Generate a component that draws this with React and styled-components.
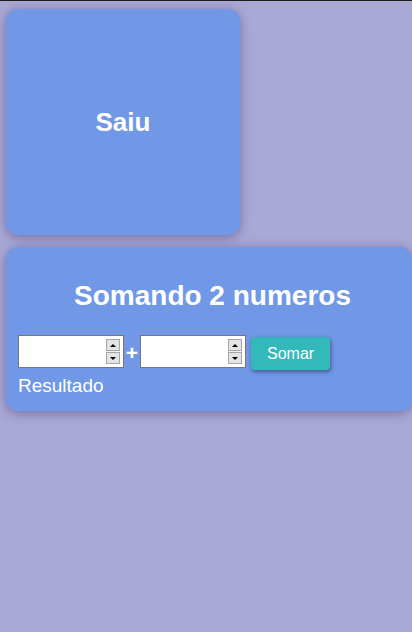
import React from "react";
import styled, { createGlobalStyle } from "styled-components";

const Global = createGlobalStyle`
  html { border-top: 1px solid #1b1b1b; background: #aaa9d6; }
  body {
    margin: 0;
    background: #aaa9d6;
    font-family: "Liberation Sans", Arial, sans-serif;
    min-height: 631px;
    overflow: hidden;
  }
`;

const Page = styled.div`
  display: flex;
  flex-direction: column;
  align-items: flex-start;
  gap: 12px;
  padding: 8px 0 0 6px;
`;

const Card = styled.div`
  box-sizing: border-box;
  background: #7098e6;
  border-radius: 12px;
  box-shadow: 0 2px 12px rgba(70, 60, 120, 0.55);
  color: #fff;
  width: ${(p) => p.$w}px;
  height: ${(p) => p.$h}px;
`;

const SplashCard = styled(Card)`
  display: flex;
  align-items: center;
  justify-content: center;
`;

const BigText = styled.h1`
  margin: 0;
  font-size: 26px;
  font-weight: bold;
  line-height: 30px;
`;

const SumCard = styled(Card)`
  display: flex;
  flex-direction: column;
  padding: 33px 12px 15px 12px;
`;

const Title = styled.h2`
  margin: 0 0 23px 0;
  padding-left: 7px;
  text-align: center;
  font-size: 28px;
  font-weight: bold;
  line-height: 32px;
`;

const Row = styled.div`
  display: flex;
  align-items: flex-start;
`;

const InputBox = styled.div`
  box-sizing: border-box;
  width: 106px;
  height: 33px;
  border: 1px solid #767676;
  background: #fff;
  display: flex;
  align-items: center;
  padding-right: 3px;
`;

const NumInput = styled.input`
  flex: 1;
  min-width: 0;
  border: none;
  outline: none;
  background: transparent;
  font-family: inherit;
  font-size: 14px;
  padding: 0 4px;
`;

const Spinner = styled.div`
  display: flex;
  flex-direction: column;
  width: 14px;
  height: 25px;
  background: #f0f0f0;
  gap: 1px;
`;

const SpinBtn = styled.div`
  flex: 1;
  box-sizing: border-box;
  border: 1px solid #a6a6a6;
  background: #e4e4e4;
  display: flex;
  align-items: center;
  justify-content: center;
`;

const Arrow = styled.span`
  width: 0;
  height: 0;
  border-left: 3px solid transparent;
  border-right: 3px solid transparent;
  ${(p) =>
    p.$up
      ? "border-bottom: 3px solid #000;"
      : "border-top: 3px solid #000;"}
`;

const Plus = styled.span`
  width: 16px;
  text-align: center;
  font-size: 21px;
  font-weight: bold;
  line-height: 35px;
  color: #fff;
`;

const Button = styled.button`
  margin: 2px 0 0 5px;
  height: 33px;
  padding: 0 16px;
  border: none;
  border-radius: 4px;
  background: #33b9b9;
  color: #fff;
  font-family: inherit;
  font-size: 16px;
  box-shadow: 1px 2px 4px rgba(40, 40, 90, 0.6);
`;

const Result = styled.div`
  margin-top: 6px;
  font-size: 19px;
  line-height: 20px;
`;

function NumberField() {
  return (
    <InputBox>
      <NumInput type="text" />
      <Spinner>
        <SpinBtn>
          <Arrow $up />
        </SpinBtn>
        <SpinBtn>
          <Arrow />
        </SpinBtn>
      </Spinner>
    </InputBox>
  );
}

export default function App() {
  return (
    <>
      <Global />
      <Page>
        <SplashCard $w={234} $h={226}>
          <BigText>Saiu</BigText>
        </SplashCard>
        <SumCard $w={406} $h={164}>
          <Title>Somando 2 numeros</Title>
          <Row>
            <NumberField />
            <Plus>+</Plus>
            <NumberField />
            <Button>Somar</Button>
          </Row>
          <Result>Resultado</Result>
        </SumCard>
      </Page>
    </>
  );
}
